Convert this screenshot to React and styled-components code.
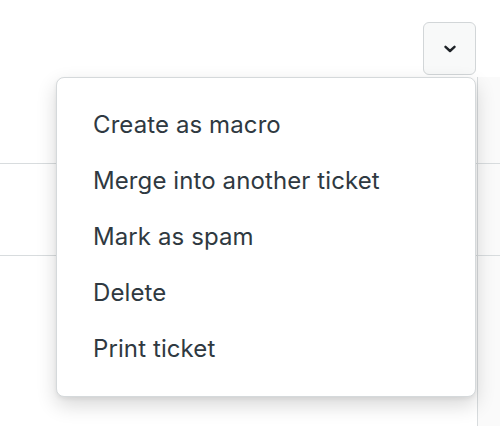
import React from 'react';
import styled, { createGlobalStyle } from 'styled-components';

const GlobalStyle = createGlobalStyle`
    html, body {
        margin: 0;
        padding: 0;
        background: #ffffff;
    }
    body {
        font-family: Inter, "Noto Sans", "Liberation Sans", sans-serif;
    }
`;

const Page = styled.div`
    height: 426px;
    overflow: hidden;
    position: relative;
    width: 500px;
`;

const Header = styled.div`
    box-sizing: border-box;
    display: flex;
    height: 77px;
    justify-content: flex-end;
    padding: 22px 24px 0 0;
`;

const ToggleButton = styled.button`
    align-items: center;
    background-color: #f8f9f9;
    border: 1px solid #d2d6d8;
    border-radius: 6px;
    box-sizing: border-box;
    color: #2f3941;
    display: flex;
    height: 53px;
    justify-content: center;
    padding: 0;
    width: 53px;
`;

const Body = styled.div`
    display: grid;
    grid-template-columns: 1fr 23px;
    height: 349px;
`;

const Main = styled.div`
    display: flex;
    flex-direction: column;
`;

const Side = styled.div`
    background-color: #fafafa;
    border-left: 1px solid #d8dcde;
    display: flex;
    flex-direction: column;
`;

const Row = styled.div`
    border-bottom: 1px solid #d8dcde;
    height: ${props => props.height}px;
`;

const Menu = styled.ul`
    background-color: #ffffff;
    border: 1px solid #d5d9db;
    border-radius: 8px;
    box-shadow: 0 8px 20px rgba(0, 0, 0, 0.16), 0 2px 4px rgba(0, 0, 0, 0.06);
    box-sizing: border-box;
    left: 56px;
    list-style: none;
    margin: 0;
    padding: 19px 0;
    position: absolute;
    top: 77px;
    width: 420px;
`;

const MenuItem = styled.li`
    color: #2f3941;
    cursor: pointer;
    font-size: 24px;
    letter-spacing: 0.1px;
    line-height: 56px;
    padding: 0 36px;
`;

const items = [
    'Create as macro',
    'Merge into another ticket',
    'Mark as spam',
    'Delete',
    'Print ticket',
];

const Chevron = () => (
    <svg width="12" height="8" viewBox="0 0 12 8" fill="none">
        <path d="M1.5 1.8 L6 6 L10.5 1.8" stroke="#1f2328" strokeWidth="2.4" strokeLinecap="round" strokeLinejoin="round" />
    </svg>
);

const App = () => {
    return (
        <Page>
            <GlobalStyle />
            <Header>
                <ToggleButton aria-label="More options">
                    <Chevron />
                </ToggleButton>
            </Header>

            <Body>
                <Main>
                    <Row height={86} />
                    <Row height={91} />
                </Main>
                <Side>
                    <Row height={86} />
                    <Row height={91} />
                </Side>
            </Body>

            <Menu>
                {items.map(item => (
                    <MenuItem key={item}>{item}</MenuItem>
                ))}
            </Menu>
        </Page>
    );
};

export default App;
